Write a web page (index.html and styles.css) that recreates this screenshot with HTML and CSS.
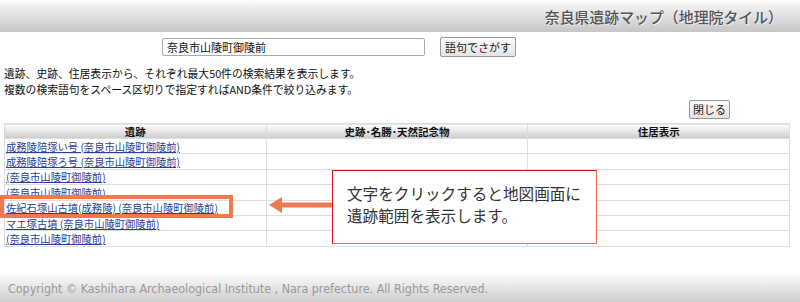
FILE: index.html
```html
<!DOCTYPE html>
<html lang="ja">
<head>
<meta charset="utf-8">
<title>奈良県遺跡マップ</title>
<link rel="stylesheet" href="styles.css">
</head>
<body>
<div class="page">
  <header class="topbar">
    <h1 class="title">奈良県遺跡マップ（地理院タイル）</h1>
  </header>
  <div class="search">
    <input class="search-input" type="text" value="奈良市山陵町御陵前">
    <button class="btn">語句でさがす</button>
  </div>
  <p class="note">遺跡、史跡、住居表示から、それぞれ最大50件の検索結果を表示します。<br>複数の検索語句をスペース区切りで指定すればAND条件で絞り込みます。</p>
  <div class="close-row"><button class="btn">閉じる</button></div>
  <table class="results">
    <thead>
      <tr><th>遺跡</th><th>史跡･名勝･天然記念物</th><th>住居表示</th></tr>
    </thead>
    <tbody>
      <tr><td><a href="#">成務陵陪塚い号 (奈良市山陵町御陵前)</a></td><td></td><td></td></tr>
      <tr><td><a href="#">成務陵陪塚ろ号 (奈良市山陵町御陵前)</a></td><td></td><td></td></tr>
      <tr><td><a href="#">(奈良市山陵町御陵前)</a></td><td></td><td></td></tr>
      <tr><td><a href="#">(奈良市山陵町御陵前)</a></td><td></td><td></td></tr>
      <tr><td><a href="#">佐紀石塚山古墳(成務陵) (奈良市山陵町御陵前)</a></td><td></td><td></td></tr>
      <tr><td><a href="#">マエ塚古墳 (奈良市山陵町御陵前)</a></td><td></td><td></td></tr>
      <tr><td><a href="#">(奈良市山陵町御陵前)</a></td><td></td><td></td></tr>
    </tbody>
  </table>
  <footer class="footer">Copyright © Kashihara Archaeological Institute , Nara prefecture. All Rights Reserved.</footer>

  <div class="highlight"></div>
  <svg class="arrow" width="64" height="20" viewBox="0 0 64 20">
    <polygon points="1,10 14,2 14,7.5 64,7.5 64,12.5 14,12.5 14,18" fill="#ef7a50"/>
  </svg>
  <div class="callout">文字をクリックすると地図画面に<br>遺跡範囲を表示します。</div>
</div>
</body>
</html>
```

FILE: styles.css
```css
* { box-sizing: border-box; }
html, body { margin: 0; padding: 0; background: #fff; }
body {
  font-family: "Noto Sans CJK JP", "Noto Sans", sans-serif;
  color: #222;
}
.page {
  position: relative;
  width: 800px;
  height: 302px;
  display: flex;
  flex-direction: column;
  overflow: hidden;
}
.topbar {
  height: 32px;
  background: linear-gradient(#ffffff 0%, #f2f2f2 15%, #c6c6c6 100%);
  display: flex;
  justify-content: flex-end;
  align-items: center;
  padding-right: 17px;
}
.title {
  margin: 0;
  font-size: 14.9px;
  font-weight: 500;
  color: #555;
  text-shadow: 1px 1px 0 rgba(255,255,255,0.6);
  line-height: 1;
  padding-top: 2px;
}
.search {
  display: flex;
  align-items: center;
  gap: 15px;
  margin-top: 5px;
  padding-left: 162px;
  height: 20px;
}
.search-input {
  width: 263px;
  height: 18px;
  border: 1px solid #aaa;
  border-radius: 2px;
  font: 11px "Noto Sans CJK JP", sans-serif;
  padding: 0 4px;
  color: #111;
}
.btn {
  height: 20px;
  padding: 0 4px;
  font: 11px "Noto Sans CJK JP", sans-serif;
  color: #222;
  background: linear-gradient(#fbfbfb, #e4e4e4);
  border: 1px solid #999;
  border-radius: 2px;
  line-height: 17px;
}
.note {
  margin: 8px 0 0;
  padding-left: 4px;
  font-size: 10.8px;
  line-height: 16px;
  color: #111;
}
.close-row {
  display: flex;
  justify-content: flex-end;
  padding-right: 70px;
  margin-top: 3px;
}
.close-row .btn { height: 19px; width: 41px; padding: 0; }
.results {
  margin: 4px 10px 0 4px;
  width: 786px;
  border-collapse: collapse;
  table-layout: fixed;
  font-size: 10.3px;
}
.results th {
  height: 15px;
  padding: 0;
  font-weight: bold;
  font-size: 10.5px;
  line-height: 13px;
  color: #111;
  background: linear-gradient(#ffffff, #cccccc);
  border: 1px solid #dcdcdc;
}
.results td {
  height: 15.4px;
  padding: 0 1px;
  line-height: 13px;
  border: 1px solid #dedede;
  white-space: nowrap;
}
.results a { color: #2b3f99; text-decoration: underline; }
.footer {
  margin-top: auto;
  height: 30px;
  background: linear-gradient(#ffffff, #cdcdcd);
  color: #999;
  font-family: "DejaVu Sans", sans-serif;
  font-stretch: condensed;
  font-size: 12.4px;
  display: flex;
  align-items: center;
  padding-left: 8px;
  padding-top: 2px;
}
.highlight {
  position: absolute;
  left: 0;
  top: 195px;
  width: 233px;
  height: 23px;
  border: 4px solid #ef7a50;
}
.arrow {
  position: absolute;
  left: 268px;
  top: 195px;
}
.callout {
  position: absolute;
  left: 332px;
  top: 170px;
  width: 265px;
  height: 74px;
  background: #fff;
  border: 1px solid #ef7050;
  border-top-color: #e01010;
  border-left-color: #e01010;
  padding: 11px 0 0 14px;
  font-size: 15.6px;
  line-height: 22px;
  color: #333;
}
```
